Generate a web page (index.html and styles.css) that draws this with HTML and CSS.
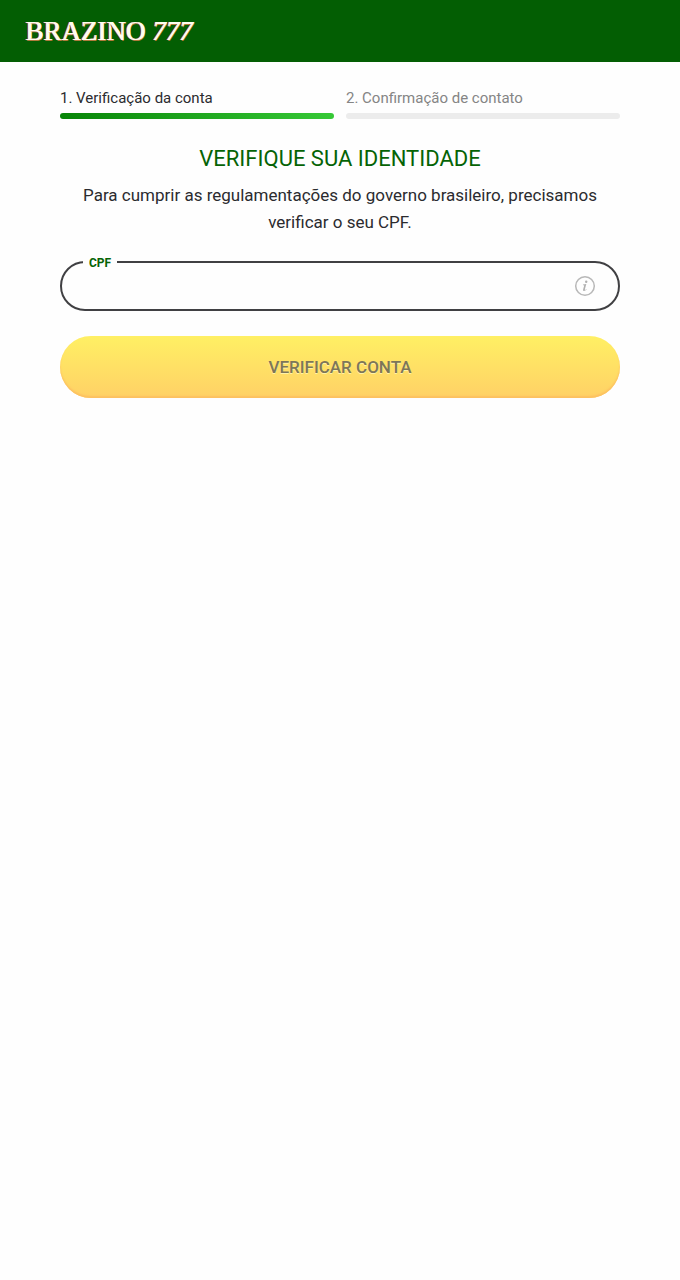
FILE: index.html
```html
<!DOCTYPE html>
<html lang="pt-BR">
  <head>
    <meta charset="utf-8" />
    <meta name="viewport" content="width=device-width, initial-scale=1">
    <title>Verifique sua identidade</title>
    <link rel="stylesheet" href="styles.css">
  </head>
  <body>
    <header class="header">
      <a href="#" class="logo">BRAZINO <span class="logo-num">777</span></a>
    </header>
    <main class="content">
      <ol class="steps">
        <li class="step active">1. Verificação da conta</li>
        <li class="step">2. Confirmação de contato</li>
      </ol>
      <h1 class="title">VERIFIQUE SUA IDENTIDADE</h1>
      <p class="text">Para cumprir as regulamentações do governo brasileiro, precisamos verificar o seu CPF.</p>
      <form class="form">
        <div class="field">
          <label for="cpf" class="field-label">CPF</label>
          <input type="text" id="cpf" class="field-input" inputmode="numeric" />
          <button type="button" class="info" aria-label="Info">
            <svg width="22" height="22" viewBox="0 0 22 22" fill="none">
              <circle cx="11" cy="11" r="9.3" stroke="#b8b8b8" stroke-width="1.5" />
              <circle cx="12.2" cy="6.7" r="1.2" fill="#b0b0b0" />
              <path d="M9 9.6l3.3-.5-1.4 5.1q-.2.9.4.7.5-.2 1.1-.9l.3.3q-1.3 1.8-2.7 1.8-1.3-.1-.9-1.6l1.1-4.1-1.3-.3z" fill="#b0b0b0" />
            </svg>
          </button>
        </div>
        <button type="submit" class="submit">VERIFICAR CONTA</button>
      </form>
    </main>
  </body>
</html>
```

FILE: styles.css
```css
* {
  margin: 0;
  padding: 0;
  box-sizing: border-box;
}
body {
  background: #fefefe;
  color: #2b2b2f;
  font-family: Roboto, "Liberation Sans", sans-serif;
}
.header {
  height: 62px;
  padding: 0 25px;
  display: flex;
  align-items: center;
  background: #035e03;
}
.logo {
  color: #fffdf0;
  font-family: "Liberation Serif", serif;
  font-size: 27px;
  line-height: 32px;
  text-decoration: none;
  text-shadow: -1px 0 #8a3a12, 1px 0 #fffdf0, 1px 1px #b07a3c;
}
.logo-num {
  font-style: italic;
}
.content {
  padding: 26px 60px;
}
.steps {
  display: flex;
  gap: 12px;
  list-style: none;
}
.step {
  flex: 1;
  color: #858585;
  font-size: 15px;
  line-height: 20px;
}
.step::after {
  content: "";
  display: block;
  height: 6px;
  margin-top: 5px;
  border-radius: 3px;
  background: #ececec;
}
.step.active {
  color: #2b2b2f;
}
.step.active::after {
  background: linear-gradient(90deg, #078407, #36c936);
}
.title {
  margin-top: 24px;
  color: #056305;
  font-size: 22px;
  font-weight: 400;
  line-height: 32px;
  text-align: center;
}
.text {
  margin-top: 7px;
  font-size: 17px;
  line-height: 27px;
  text-align: center;
}
.form {
  margin-top: 25px;
}
.field {
  position: relative;
  display: flex;
  align-items: center;
  height: 50px;
  padding: 0 22px;
  border: 2px solid #404043;
  border-radius: 25px;
}
/* sits over the top border and cuts it */
.field-label {
  position: absolute;
  top: -8px;
  left: 21px;
  padding: 0 6px;
  background: #fefefe;
  color: #056305;
  font-size: 12px;
  font-weight: 700;
  line-height: 16px;
}
.field-input {
  flex: 1;
  min-width: 0;
  height: 40px;
  border: none;
  outline: none;
  background: none;
  color: inherit;
  font: inherit;
  font-size: 17px;
}
.info {
  display: flex;
  border: none;
  background: none;
  cursor: pointer;
}
.submit {
  display: block;
  width: 100%;
  height: 62px;
  margin-top: 25px;
  border: none;
  border-radius: 31px;
  background: linear-gradient(#fff064, #ffd166);
  box-shadow: inset 0 -2px 2px #fdc060;
  color: #7d7659;
  font-family: inherit;
  font-size: 17px;
  font-weight: 500;
  text-shadow: 0 1px #fff3a8;
  cursor: pointer;
}
```
